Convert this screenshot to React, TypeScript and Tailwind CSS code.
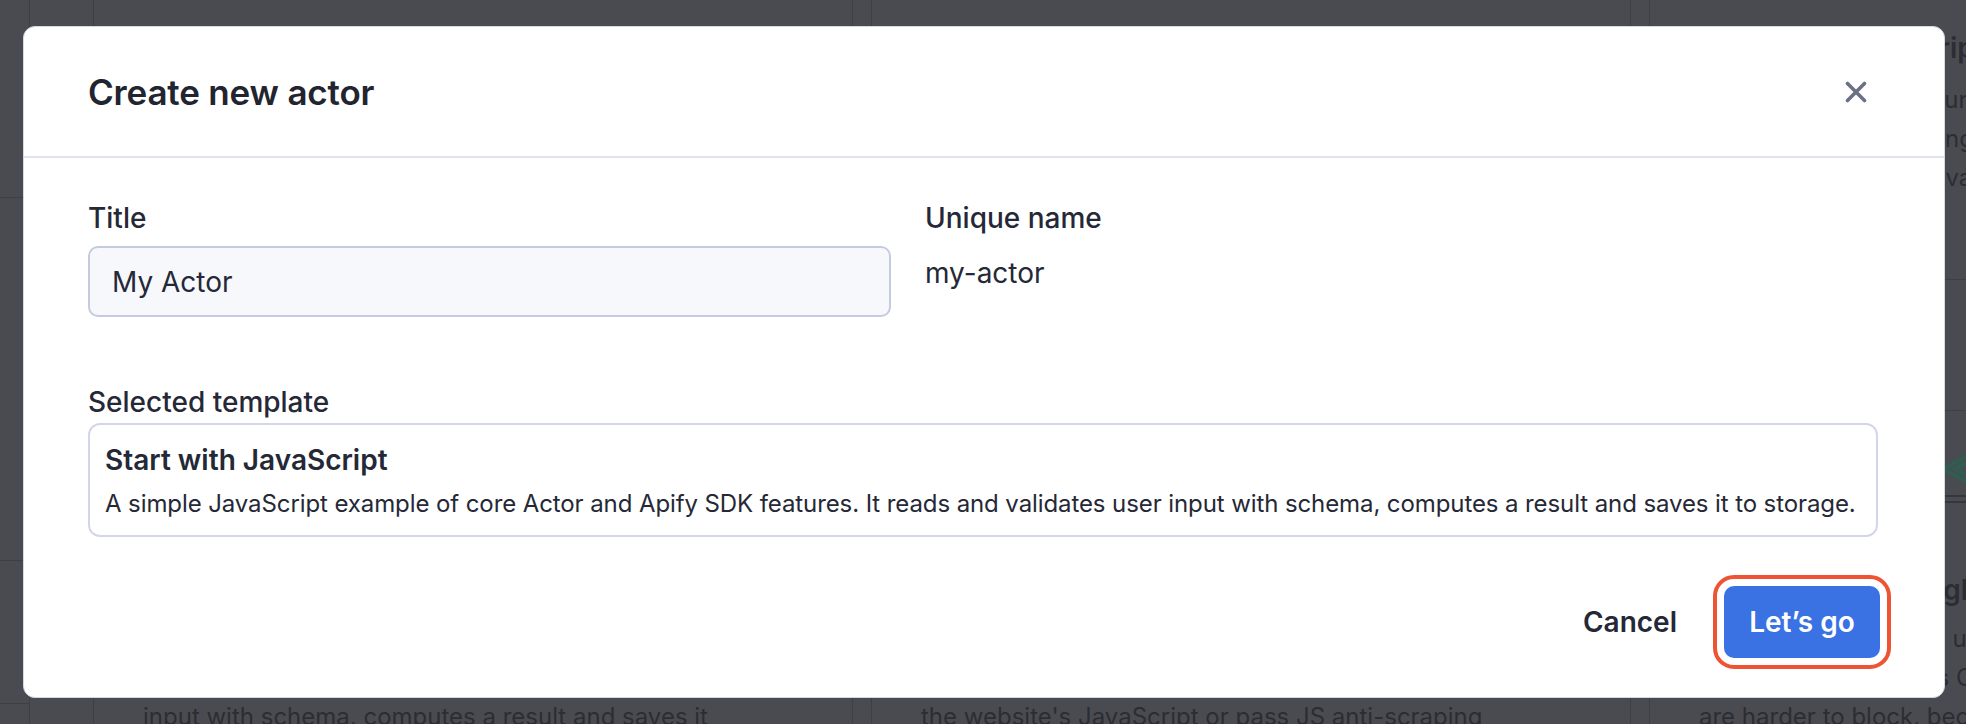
import React from 'react';

// Dimmed page behind the dialog
function BackgroundPage() {
  return (
    <div className="flex h-[724px] w-[1966px] overflow-hidden bg-[#4a4b51] text-[#2c2d33]">
      <div className="flex w-[30px] shrink-0 flex-col border-r border-[#3f4045]">
        <div className="h-[198px] shrink-0 border-b border-[#3f4045]" />
        <div className="h-[363px] shrink-0 border-b border-[#3f4045]" />
        <div className="h-[143px] shrink-0 border-b border-[#3f4045]" />
      </div>
      <div className="ml-[63px] flex shrink-0 gap-[18px]">
        <div className="h-[724px] w-[760px] shrink-0 border-x border-[#3f4045] pl-[49px] pt-[637px] text-[24px] leading-[32px]">
          <p>A simple JavaScript example of core Actor and Apify SDK</p>
          <p>features. It reads and validates user</p>
          <p>input with schema, computes a result and saves it</p>
        </div>
        <div className="h-[724px] w-[760px] shrink-0 border-x border-[#3f4045] pl-[49px] pt-[637px] text-[24px] leading-[32px]">
          <p>Crawler example that uses headless Chrome driven by</p>
          <p>Puppeteer. It can scrape pages that render with</p>
          <p>the website's JavaScript or pass JS anti-scraping</p>
        </div>
        <div className="flex h-[724px] w-[760px] shrink-0 flex-col overflow-hidden border-x border-[#3f4045]">
          <div className="h-[280px] shrink-0 border-b border-[#3f4045] pl-[49px] pt-[28px]">
            <p className="text-[28px] font-semibold leading-[40px]">Start with TypeScript and Bun runtime</p>
            <p className="mt-[12px] text-[24px] leading-[39px]">Template with a Bun runtime that compiles TS data</p>
            <p className="text-[24px] leading-[39px]">extraction scraper using Cheerio library and the</p>
            <p className="text-[24px] leading-[39px]">Apify SDK, with input validation and storage.</p>
          </div>
          <div className="mt-[130px] shrink-0 border-t border-[#3f4045] pl-[49px] pt-[40px]">
            <svg width="120" height="40" viewBox="0 0 120 40" className="ml-[230px] block" fill="none" stroke="#2f5e50" strokeWidth="4">
              <path d="M40 4L14 18L40 32" />
              <path d="M52 4L26 18L52 32" />
            </svg>
            <div className="mt-[4px] h-[8px] w-[700px] border-y-2 border-[#36373c]" />
            <p className="mt-[67px] text-[28px] font-semibold leading-[40px]">Crawlee + Playwright + Chrome freeze</p>
            <p className="mt-[9px] text-[24px] leading-[39px]">Web scraper example using Crawlee netw</p>
            <p className="text-[24px] leading-[39px]">that controls headless Chrome or Fir</p>
            <p className="text-[24px] leading-[39px]">are harder to block, because it</p>
          </div>
        </div>
      </div>
    </div>
  );
}

function CloseIcon() {
  return (
    <svg width="22" height="22" viewBox="0 0 22 22" fill="none" stroke="#6b7085" strokeWidth="3.6" strokeLinecap="round">
      <path d="M2.5 2.5L19.5 19.5M19.5 2.5L2.5 19.5" />
    </svg>
  );
}

export default function App() {
  return (
    <div className="relative h-[724px] w-[1966px] overflow-hidden" style={{ fontFamily: 'Inter, "Noto Sans", sans-serif' }}>
      <BackgroundPage />

      {/* dialog */}
      <div className="absolute left-[23px] top-[26px] flex h-[672px] w-[1922px] flex-col rounded-[12px] border border-[#d5d7e6] bg-white text-[#252836]">
        <div className="flex h-[131px] items-center justify-between border-b-2 border-[#e1e3ef] pl-[64px] pr-[77px]">
          <h2 className="text-[35px] font-semibold leading-[44px] tracking-[-0.005em] text-[#22252f]">Create new actor</h2>
          <button className="flex h-[22px] w-[22px] items-center justify-center">
            <CloseIcon />
          </button>
        </div>

        <div className="flex flex-1 flex-col pl-[64px] pr-[66px] pt-[42px]">
          <div className="flex">
            <div className="w-[803px]">
              <label className="block text-[28px] font-medium leading-[36px]">Title</label>
              <input
                readOnly
                defaultValue="My Actor"
                className="mt-[10px] h-[71px] w-full rounded-[10px] border-2 border-[#c6cadf] bg-[#f7f8fc] px-[22px] text-[28px] leading-[36px] text-[#252836] outline-none"
              />
            </div>
            <div className="ml-[34px]">
              <div className="text-[28px] font-medium leading-[36px]">Unique name</div>
              <div className="mt-[19px] text-[28px] leading-[36px]">my-actor</div>
            </div>
          </div>

          <div className="mt-[67px] text-[28px] font-medium leading-[36px]">Selected template</div>
          <div className="mt-[3px] h-[114px] rounded-[12px] border-2 border-[#d3d6ea] pl-[15px] pt-[17px]">
            <div className="text-[28px] font-semibold leading-[36px]">Start with JavaScript</div>
            <div className="mt-[10px] text-[24px] leading-[32px] tracking-[-0.004em]">
              A simple JavaScript example of core Actor and Apify SDK features. It reads and validates user input with schema, computes a result and saves it to storage.
            </div>
          </div>

          <div className="mt-[49px] flex items-center justify-end">
            <button className="mr-[47px] text-[28px] font-semibold leading-[36px] text-[#252836]">Cancel</button>
            <button className="-mr-[2px] h-[72px] w-[156px] rounded-[10px] bg-[#3a71e3] text-[28px] font-semibold leading-[36px] text-white outline-4 outline-offset-[7px] outline-[#ee5433]">
              Let’s go
            </button>
          </div>
        </div>
      </div>
    </div>
  );
}
